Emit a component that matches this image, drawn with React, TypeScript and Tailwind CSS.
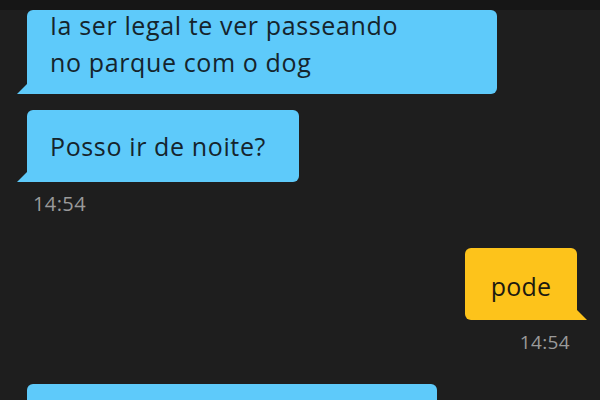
import type { ReactNode } from "react";

const font = { fontFamily: '"Open Sans", "Noto Sans", sans-serif' };

function Tail({ side, color }: { side: "left" | "right"; color: string }) {
  if (side === "left") {
    return (
      <svg
        className="absolute bottom-0 left-[-10px]"
        width="11"
        height="11"
        viewBox="0 0 11 11"
      >
        <polygon points="11,0 11,11 0,11" fill={color} />
      </svg>
    );
  }
  return (
    <svg
      className="absolute bottom-0 right-[-10px]"
      width="11"
      height="11"
      viewBox="0 0 11 11"
    >
      <polygon points="0,0 0,11 11,11" fill={color} />
    </svg>
  );
}

function Incoming({
  children,
  className,
}: {
  children: ReactNode;
  className: string;
}) {
  return (
    <div
      className={`relative ml-[27px] shrink-0 rounded-md rounded-bl-none bg-[#5ecafa] pl-[23px] text-[25px] font-medium tracking-[0.025em] text-[#15242c] ${className}`}
    >
      {children}
      <Tail side="left" color="#5ecafa" />
    </div>
  );
}

export default function App() {
  return (
    <div
      className="flex h-[400px] w-[600px] flex-col overflow-hidden bg-[#1e1e1e]"
      style={font}
    >
      <div className="h-[10px] shrink-0 bg-[#161616]" />

      <Incoming className="h-[84px] w-[470px] leading-[37px]">
        <p className="mt-[-3px]">Ia ser legal te ver passeando</p>
        <p>no parque com o dog</p>
      </Incoming>

      <Incoming className="mt-[16px] h-[72px] w-[272px] pt-[17px] leading-[39px]">
        <p>Posso ir de noite?</p>
      </Incoming>

      <p className="ml-[33px] mt-[12px] text-[20px] leading-[20px] tracking-[0.02em] text-[#9a9a9a]">
        14:54
      </p>

      <div className="mt-[34px] flex flex-col items-end pr-[23px]">
        <div className="relative flex h-[72px] w-[112px] items-center justify-center rounded-md rounded-br-none bg-[#fdc31b] pt-[6px] text-[25px] font-medium tracking-[0.01em] text-[#1d1a10]">
          pode
          <Tail side="right" color="#fdc31b" />
        </div>
        <p className="mr-[7px] mt-[12px] text-[19px] leading-[20px] tracking-[0.02em] text-[#9a9a9a]">
          14:54
        </p>
      </div>

      <div className="ml-[27px] mt-[32px] h-[40px] w-[410px] shrink-0 rounded-md bg-[#5ecafa]" />
    </div>
  );
}
